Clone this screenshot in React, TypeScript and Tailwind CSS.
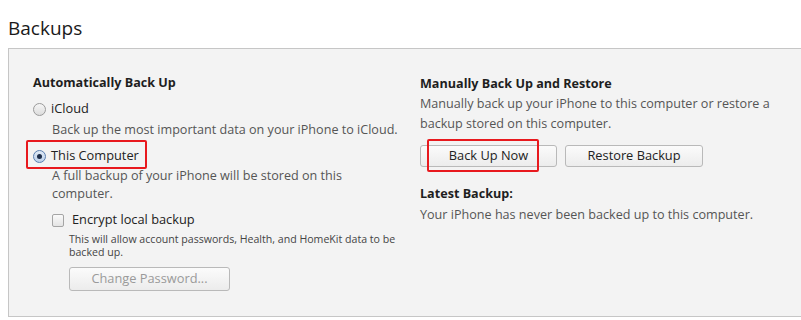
import React from 'react';

const font = { fontFamily: '"Open Sans", "Noto Sans", Arial, sans-serif' };

const Radio: React.FC<{ checked?: boolean }> = ({ checked }) => (
  <span
    className={`inline-flex items-center justify-center w-[13px] h-[13px] rounded-full border shrink-0 ${
      checked ? 'border-[#5a7fb0] bg-gradient-to-b from-[#dfe9f5] to-[#bcd0ea]' : 'border-[#9a9a9a] bg-gradient-to-b from-[#f6f6f6] to-[#dcdcdc]'
    }`}
  >
    {checked && <span className="w-[5px] h-[5px] rounded-full bg-[#1d2e4a]" />}
  </span>
);

const Button: React.FC<{ label: string; disabled?: boolean; className?: string }> = ({ label, disabled, className }) => (
  <div
    className={`flex items-center justify-center rounded-[3px] border border-[#b9b9b9] bg-gradient-to-b from-[#fbfbfb] to-[#ececec] text-[12.8px] ${
      disabled ? 'text-[#9a9a9a]' : 'text-[#222]'
    } ${className ?? ''}`}
  >
    {label}
  </div>
);

export default function App() {
  return (
    <div className="w-[801px] h-[320px] bg-white overflow-hidden relative" style={font}>
      <div className="pl-2 pt-[14px] h-[48px] text-[19px] leading-[28px] text-[#1a1a1a]">Backups</div>

      <div className="ml-2 w-[820px] h-[269px] border border-[#c6c6c6] bg-[#f3f3f3] flex">
        {/* Left column */}
        <div className="pl-[24px] pt-[24px] w-[411px] shrink-0">
          <div className="text-[12.6px] leading-[20px] font-bold text-[#1e1e1e]">Automatically Back Up</div>

          <div className="mt-[6px] flex items-center gap-[5px] h-[20px] text-[12.8px] text-[#222]">
            <Radio />
            <span>iCloud</span>
          </div>
          <div className="mt-px pl-[19px] text-[12.6px] leading-[20px] text-[#555] whitespace-nowrap">
            Back up the most important data on your iPhone to iCloud.
          </div>

          <div className="relative mt-[6px] flex items-center gap-[5px] h-[20px] text-[12.8px] text-[#222]">
            <Radio checked />
            <span>This Computer</span>
            <div className="absolute left-[-7px] top-[-6px] w-[121px] h-[29px] border-2 border-[#e8191e] rounded-[2px]" />
          </div>
          <div className="mt-px pl-[19px] w-[340px] text-[12.6px] leading-[18px] text-[#555]">
            A full backup of your iPhone will be stored on this computer.
          </div>

          <div className="mt-[7px] pl-[19px] flex items-center gap-[8px] h-[20px] text-[12.8px] text-[#222]">
            <span className="w-[12px] h-[13px] rounded-[2px] border border-[#a5a5a5] bg-gradient-to-b from-[#fafafa] to-[#e4e4e4] shrink-0" />
            <span>Encrypt local backup</span>
          </div>
          <div className="mt-[3px] pl-[36px] w-[370px] text-[10.6px] leading-[13px] text-[#444]">
            This will allow account passwords, Health, and HomeKit data to be backed up.
          </div>
          <div className="mt-[8px] pl-[36px]">
            <Button label="Change Password..." disabled className="w-[161px] h-[24px]" />
          </div>
        </div>

        {/* Right column */}
        <div className="pt-[25px]">
          <div className="text-[12.6px] leading-[20px] font-bold text-[#1e1e1e]">Manually Back Up and Restore</div>
          <div className="w-[360px] text-[12.6px] leading-[20px] text-[#555]">
            Manually back up your iPhone to this computer or restore a backup stored on this computer.
          </div>
          <div className="mt-[11px] flex gap-[8px]">
            <div className="relative">
              <Button label="Back Up Now" className="w-[137px] h-[22px]" />
              <div className="absolute left-[7px] top-[-6px] w-[112px] h-[33px] border-2 border-[#e8191e] rounded-[2px]" />
            </div>
            <Button label="Restore Backup" className="w-[138px] h-[22px]" />
          </div>
          <div className="mt-[17px] text-[12.6px] leading-[20px] font-bold text-[#1e1e1e]">Latest Backup:</div>
          <div className="mt-px text-[12.6px] leading-[20px] text-[#555]">
            Your iPhone has never been backed up to this computer.
          </div>
        </div>
      </div>
    </div>
  );
}
